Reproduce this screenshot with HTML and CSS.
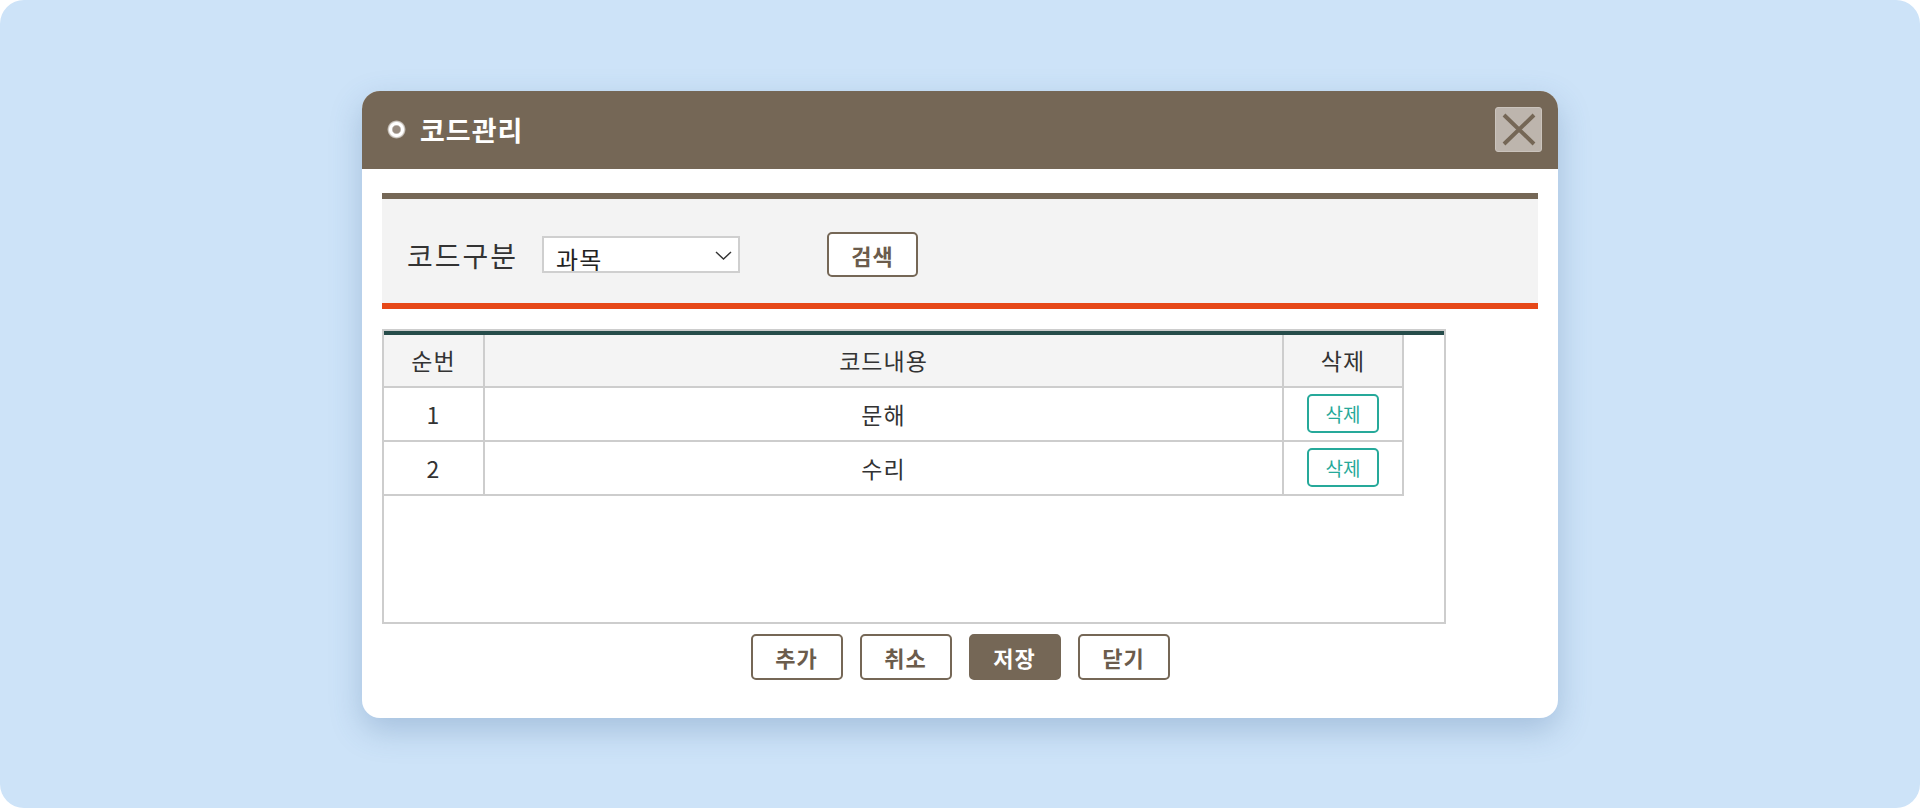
FILE: index.html
```html
<!DOCTYPE html>
<html lang="ko">
<head>
    <meta charset="UTF-8">
    <meta name="viewport" content="width=device-width, initial-scale=1.0">
    <title>코드관리</title>
    <link rel="stylesheet" href="styles.css">
</head>
<body>
    <div class="page">
        <div class="dialog">
            <div class="dialog-header">
                <h2 class="dialog-title"><span class="title-dot"></span>코드관리</h2>
                <button type="button" class="close-btn" aria-label="닫기">
                    <svg width="34" height="33" viewBox="0 0 34 33">
                        <path d="M2 2 L32 31 M32 2 L2 31" stroke="#756756" stroke-width="4" fill="none"/>
                    </svg>
                </button>
            </div>

            <div class="dialog-body">
                <div class="search-area">
                    <label class="search-label" for="codeType">코드구분</label>
                    <div class="select-wrap">
                        <select id="codeType" class="code-select">
                            <option>과목</option>
                            <option>학년</option>
                        </select>
                        <svg class="select-arrow" width="17" height="9" viewBox="0 0 17 9">
                            <path d="M1 1 L8.5 8 L16 1" stroke="#333" stroke-width="1.4" fill="none"/>
                        </svg>
                    </div>
                    <button type="button" class="btn search-btn">검색</button>
                </div>

                <div class="list-box">
                    <table class="code-table">
                        <thead>
                            <tr>
                                <th class="col-no">순번</th>
                                <th>코드내용</th>
                                <th class="col-del">삭제</th>
                            </tr>
                        </thead>
                        <tbody>
                            <tr>
                                <td>1</td>
                                <td>문해</td>
                                <td><button type="button" class="del-btn">삭제</button></td>
                            </tr>
                            <tr>
                                <td>2</td>
                                <td>수리</td>
                                <td><button type="button" class="del-btn">삭제</button></td>
                            </tr>
                        </tbody>
                    </table>
                </div>

                <div class="btn-row">
                    <button type="button" class="btn">추가</button>
                    <button type="button" class="btn">취소</button>
                    <button type="button" class="btn btn-primary">저장</button>
                    <button type="button" class="btn">닫기</button>
                </div>
            </div>
        </div>
    </div>
</body>
</html>
```

FILE: styles.css
```css
* {
    margin: 0;
    padding: 0;
    box-sizing: border-box;
    font-family: "Noto Sans CJK KR", "Noto Sans", sans-serif;
}

body {
    background: #fff;
}

.page {
    height: 808px;
    background: #cde3f8;
    border-radius: 24px;
    display: flex;
    justify-content: center;
    align-items: center;
}

.dialog {
    width: 1196px;
    background: #fff;
    border-radius: 18px;
    overflow: hidden;
    box-shadow: 0 12px 32px rgba(60, 100, 150, 0.28);
}

.dialog-header {
    height: 78px;
    background: #756756;
    display: flex;
    align-items: center;
    justify-content: space-between;
    padding: 0 16px 0 25px;
}

.dialog-title {
    display: flex;
    align-items: center;
    gap: 14px;
    color: #fff;
    font-size: 27px;
    font-weight: 700;
    letter-spacing: 1px;
}

.title-dot {
    width: 19px;
    height: 19px;
    border-radius: 50%;
    background: radial-gradient(circle, #978b80 0, #978b80 3.5px, #fff 5px, #fff 7px, rgba(255, 255, 255, 0.5) 8.5px, rgba(255, 255, 255, 0) 9.5px);
}

.close-btn {
    width: 47px;
    height: 45px;
    background: #bdb5ad;
    border: 1px solid #cbc4bd;
    border-radius: 3px;
    display: flex;
    align-items: center;
    justify-content: center;
    cursor: pointer;
}

.dialog-body {
    padding: 24px 20px 38px;
}

.search-area {
    height: 116px;
    background: #f3f3f3;
    border-top: 6px solid #756756;
    border-bottom: 6px solid #e64818;
    display: flex;
    align-items: center;
    padding: 8px 0 0 25px;
}

.search-label {
    font-size: 28px;
    color: #333;
    letter-spacing: 2px;
    margin-right: 24px;
}

.select-wrap {
    position: relative;
    width: 198px;
    height: 37px;
}

.code-select {
    width: 100%;
    height: 100%;
    appearance: none;
    -webkit-appearance: none;
    border: 2px solid #cfcfcf;
    background: #fff;
    font-size: 24px;
    letter-spacing: 1px;
    color: #222;
    padding: 3px 0 0 12px;
    outline: none;
}

.select-arrow {
    position: absolute;
    right: 8px;
    top: 15px;
    pointer-events: none;
}

.btn {
    width: 92px;
    height: 46px;
    background: #fff;
    border: 2px solid #756756;
    border-radius: 5px;
    color: #6b5c4c;
    font-size: 22px;
    font-weight: 700;
    letter-spacing: 1px;
    cursor: pointer;
}

.search-btn {
    width: 91px;
    height: 45px;
    margin-left: 87px;
}

.list-box {
    width: 1064px;
    height: 295px;
    margin-top: 20px;
    border: 2px solid #cdcdcd;
    overflow: hidden;
}

.list-box::before {
    content: "";
    display: block;
    height: 4px;
    background: #264c4a;
}

.code-table {
    width: 1020px;
    border-collapse: collapse;
    table-layout: fixed;
}

.code-table th,
.code-table td {
    height: 54px;
    border-right: 2px solid #cdcdcd;
    border-bottom: 2px solid #cdcdcd;
    text-align: center;
    font-size: 23px;
    letter-spacing: 1px;
    color: #333;
    font-weight: 400;
}

.code-table th {
    height: 52px;
    background: #f4f4f4;
}

.col-no {
    width: 100px;
}

.col-del {
    width: 120px;
}

.del-btn {
    width: 72px;
    height: 39px;
    background: #fff;
    border: 2px solid #26a99a;
    border-radius: 5px;
    color: #26a99a;
    font-size: 19px;
    letter-spacing: 0;
    cursor: pointer;
}

.btn-row {
    display: flex;
    justify-content: center;
    gap: 17px;
    margin-top: 10px;
}

.btn-primary {
    background: #756756;
    color: #fff;
}
```
